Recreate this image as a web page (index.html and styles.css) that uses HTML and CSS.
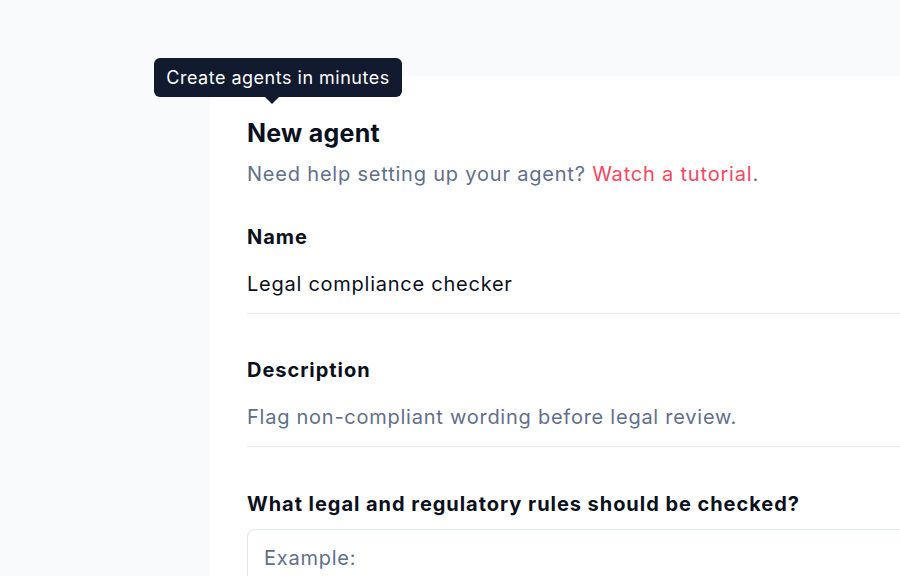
FILE: index.html
```html
<!DOCTYPE html>
<html lang="en">
<head>
<meta charset="utf-8">
<title>New agent</title>
<link rel="stylesheet" href="styles.css">
</head>
<body>
<div class="page">
  <div class="tooltip">Create agents in minutes</div>
  <main class="card">
    <h1 class="title">New agent</h1>
    <p class="subtitle">Need help setting up your agent? <a class="link" href="#">Watch a tutorial</a>.</p>

    <section class="field first">
      <label class="label">Name</label>
      <div class="value">Legal compliance checker</div>
    </section>

    <section class="field">
      <label class="label">Description</label>
      <div class="value muted">Flag non-compliant wording before legal review.</div>
    </section>

    <section class="field last">
      <label class="label">What legal and regulatory rules should be checked?</label>
      <div class="textarea">Example:</div>
    </section>
  </main>
</div>
</body>
</html>
```

FILE: styles.css
```css
* { box-sizing: border-box; }
html, body {
  margin: 0;
  height: 100%;
  overflow: hidden;
}
body {
  background: #f8fafc;
  font-family: "Inter", "Noto Sans", "Liberation Sans", sans-serif;
  color: #0b1020;
}
.page {
  position: relative;
  padding: 76px 0 0 210px;
  height: 100%;
}
.card {
  background: #ffffff;
  padding: 40px 0 0 37px;
  height: 100%;
}
.tooltip {
  position: absolute;
  left: 154px;
  top: 58px;
  width: 248px;
  height: 39px;
  background: #111a2e;
  color: #ffffff;
  font-size: 18px;
  letter-spacing: 0.5px;
  line-height: 39px;
  text-align: center;
  border-radius: 6px;
  z-index: 2;
}
.tooltip::after {
  content: "";
  position: absolute;
  left: 110px;
  top: 38px;
  border-left: 8px solid transparent;
  border-right: 8px solid transparent;
  border-top: 8px solid #111a2e;
}
.title {
  margin: 0;
  font-size: 25px;
  font-weight: 700;
  line-height: 34px;
  letter-spacing: 0.25px;
}
.subtitle {
  margin: 10px 0 0;
  font-size: 20px;
  line-height: 28px;
  letter-spacing: 0.8px;
  color: #5f6f8c;
}
.link {
  color: #f6475f;
  text-decoration: none;
}
.field {
  padding: 42px 0 0;
}
.field.first {
  padding-top: 35px;
}
.field.last {
  padding-top: 43px;
}
.label {
  display: block;
  font-size: 20px;
  font-weight: 700;
  line-height: 28px;
  letter-spacing: 0.95px;
}
.value {
  margin-top: 19px;
  font-size: 20px;
  line-height: 28px;
  letter-spacing: 0.75px;
  padding-bottom: 15px;
  border-bottom: 1px solid #e6eaf0;
}
.value.muted {
  color: #5f6f8c;
}
.textarea {
  margin-top: 11px;
  border: 1px solid #e2e7ee;
  border-right: none;
  border-radius: 8px 0 0 0;
  padding: 14px 16px;
  font-size: 20px;
  line-height: 28px;
  letter-spacing: 0.75px;
  color: #5f6f8c;
  height: 120px;
}
```
